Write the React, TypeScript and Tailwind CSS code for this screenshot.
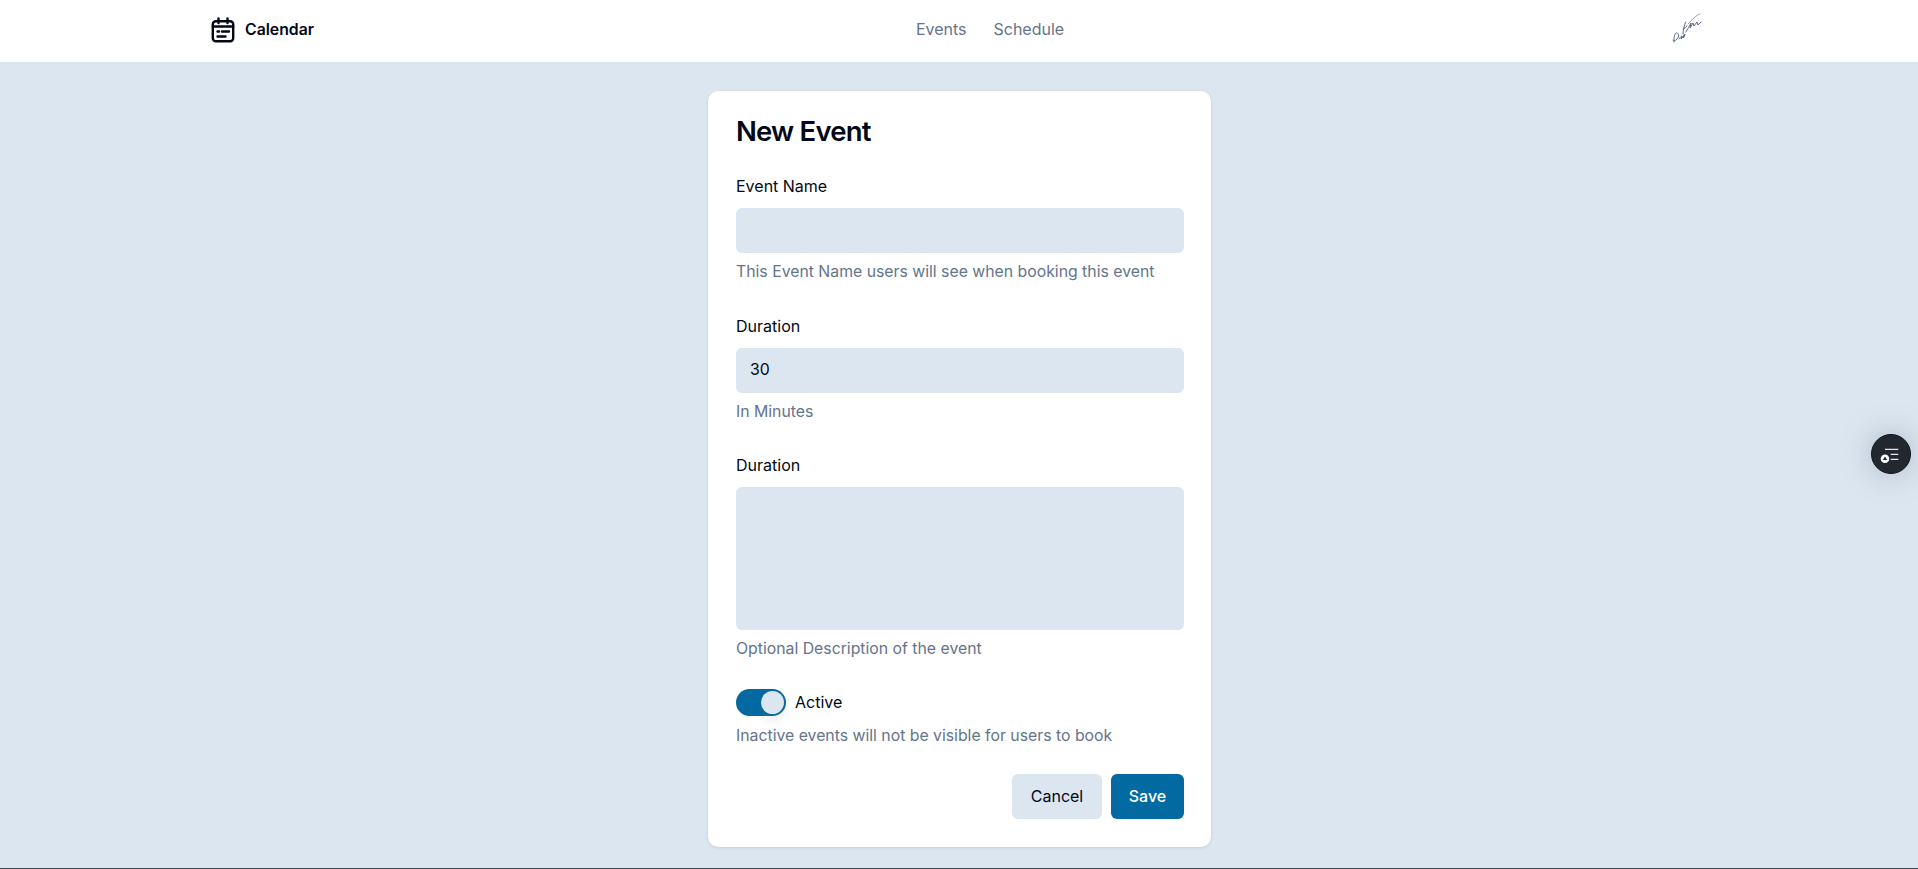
function CalendarIcon() {
  return (
    <svg viewBox="0 0 24 26" className="w-[24px] h-[26px]" fill="none" stroke="#020817" strokeWidth="2.4" strokeLinecap="round" strokeLinejoin="round">
      <rect x="1.8" y="4.2" width="20.4" height="20" rx="3" />
      <path d="M7.5 1.5v4.5M16.5 1.5v4.5M1.8 9.5h20.4" />
      <path d="M6.5 14.5h1.5M11 14.5h7M6.5 19.5h8" />
    </svg>
  );
}

function Signature() {
  return (
    <svg viewBox="0 0 36 36" className="w-[36px] h-[36px] mr-[3px] -mt-[4px]" fill="none" stroke="#5d6c83" strokeWidth="1" strokeLinecap="round" strokeLinejoin="round">
      <path d="M5 32c0-3 0-8 2-9s4 3 1 6-4 2-4 1" />
      <path d="M10 29c1-1 2-3 3-3l-1 3 3-4-1 3 2-4-1 3" />
      <path d="M16.5 12c-1 4-2.5 8-2.5 12" />
      <path d="M14 19c1.5-.5 3-1.5 4-3" />
      <path d="M17 22c2-3 3-6 5-9l-1 5 3-5 1 3 3-4 1 3 3-3" />
      <path d="M19 14c4-4 8-9 12-10" stroke="#94a3b8" />
    </svg>
  );
}

function FloatingButton() {
  return (
    <div className="absolute top-[434px] right-[7px] w-[40px] h-[40px] rounded-full bg-[#23272f] border border-[#11141a] shadow-[0_0_30px_rgba(100,116,139,0.4)] flex items-center justify-center">
      <svg viewBox="0 0 24 24" className="w-[24px] h-[24px]" fill="none">
        <path d="M6 7.3h13.3M11.7 12.3h7.6M11.7 17.3h7.6" stroke="#e2e8f0" strokeWidth="1.2" />
        <circle cx="6" cy="16.7" r="4.3" fill="#ffffff" />
        <path d="M6 14.5l2.2 3.6H3.8z" fill="#23272f" />
      </svg>
    </div>
  );
}

function Field({ label, hint, children }: { label: string; hint: string; children: React.ReactNode }) {
  return (
    <div className="flex flex-col">
      <label className="text-[16px] leading-[16px] font-normal text-[#020817]">{label}</label>
      <div className="mt-[14px]">{children}</div>
      <p className="mt-[9px] text-[15.8px] leading-[20px] text-[#64748b]">{hint}</p>
    </div>
  );
}

export default function App() {
  return (
    <div className="relative h-[869px] overflow-hidden bg-[#dbe6f0] border-b border-[#3f4450] font-['Inter',sans-serif] text-[#020817]">
      <header className="h-[63px] bg-white border-b border-[#dbe6f0]">
        <div className="max-w-[1536px] mx-auto h-full pl-[20px] pr-[19px] pb-[2px] flex items-center justify-between">
          <div className="flex items-center gap-[10px]">
            <CalendarIcon />
            <span className="text-[15.8px] font-semibold">Calendar</span>
          </div>
          <nav className="mr-[3px] mb-[2px] flex items-center gap-[27px] text-[16px] font-normal text-[#64748b]">
            <a>Events</a>
            <a>Schedule</a>
          </nav>
          <Signature />
        </div>
      </header>

      <main className="flex justify-center pt-[28px] pl-[1px]">
        <form className="w-[503px] h-[756px] bg-white rounded-[10px] shadow-[0_1px_3px_rgba(100,116,139,0.2)] pl-[28px] pr-[27px] pt-[24px] flex flex-col">
          <h1 className="text-[27.5px] leading-[32px] font-semibold tracking-[-0.8px]">New Event</h1>
          <div className="mt-[31px] flex flex-col gap-[35.5px]">
            <Field label="Event Name" hint="This Event Name users will see when booking this event">
              <div className="h-[45px] rounded-[6px] bg-[#dbe6f0]" />
            </Field>
            <Field label="Duration" hint="In Minutes">
              <div className="h-[45px] rounded-[6px] bg-[#dbe6f0] px-[14px] flex items-center text-[15.8px]">30</div>
            </Field>
            <Field label="Duration" hint="Optional Description of the event">
              <div className="h-[143px] rounded-[6px] bg-[#dbe6f0]" />
            </Field>
          </div>
          <div className="mt-[30px] flex items-center gap-[9px]">
            <div className="w-[50px] h-[27px] rounded-full bg-[#0369a1] flex items-center justify-end pr-[2px]">
              <div className="w-[23px] h-[23px] rounded-full bg-[#dbe6f0] shadow-[0_6px_10px_rgba(100,116,139,0.15)]" />
            </div>
            <span className="text-[16px] font-normal mb-[2px]">Active</span>
          </div>
          <p className="mt-[10px] text-[15.8px] leading-[20px] text-[#64748b]">Inactive events will not be visible for users to book</p>
          <div className="mt-[28px] flex justify-end gap-[9px]">
            <button className="h-[45px] w-[90px] rounded-[6px] bg-[#dbe6f0] text-[16px] font-normal pb-[1px]">Cancel</button>
            <button className="h-[45px] w-[73px] rounded-[6px] bg-[#0369a1] text-white text-[16px] font-medium pb-[1px]">Save</button>
          </div>
        </form>
      </main>

      <FloatingButton />
    </div>
  );
}
